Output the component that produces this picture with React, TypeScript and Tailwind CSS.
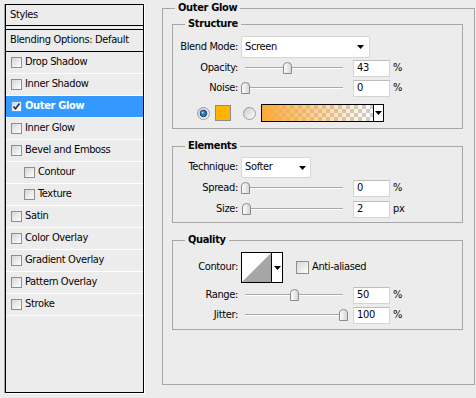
import React from "react";

const LAYERS = [
  { label: "Drop Shadow" },
  { label: "Inner Shadow" },
  { label: "Outer Glow", checked: true, active: true },
  { label: "Inner Glow" },
  { label: "Bevel and Emboss" },
  { label: "Contour", nested: true },
  { label: "Texture", nested: true },
  { label: "Satin" },
  { label: "Color Overlay" },
  { label: "Gradient Overlay" },
  { label: "Pattern Overlay" },
  { label: "Stroke" },
];

function Check({ checked = false, size = "h-[11px] w-[11px]" }: { checked?: boolean; size?: string }) {
  return (
    <span
      className={`${size} flex shrink-0 items-center justify-center border border-[#8e8e8e] bg-linear-to-br from-[#d6d6d6] to-white`}
    >
      {checked && (
        <svg width="9" height="9" viewBox="0 0 9 9">
          <path d="M1.5 4.5 L3.5 6.8 L7.5 1.5" fill="none" stroke="#1c2a6b" strokeWidth="1.6" />
        </svg>
      )}
    </span>
  );
}

function Radio({ on = false }: { on?: boolean }) {
  return (
    <svg width="13" height="13" viewBox="0 0 13 13" className="shrink-0">
      <defs>
        <linearGradient id={on ? "rg1" : "rg2"} x1="0" y1="0" x2="1" y2="1">
          <stop offset="0" stopColor="#c9c9c9" />
          <stop offset="1" stopColor="#ffffff" />
        </linearGradient>
      </defs>
      <circle cx="6.5" cy="6.5" r="6" fill={`url(#${on ? "rg1" : "rg2"})`} stroke="#9d9d9d" />
      {on && (
        <>
          <circle cx="6.5" cy="6.5" r="3.3" fill="#1f7fc6" stroke="#0c3563" strokeWidth="0.9" />
          <circle cx="5.6" cy="5.6" r="1" fill="#bfe3ff" />
        </>
      )}
    </svg>
  );
}

function Arrow() {
  return (
    <svg width="7" height="4" viewBox="0 0 7 4" className="shrink-0">
      <path d="M0 0 H7 L3.5 4 Z" fill="#000" />
    </svg>
  );
}

function Slider({ value }: { value: number }) {
  return (
    <div className="relative h-[12px] w-[108px] shrink-0">
      <div className="absolute left-[4px] right-[6px] top-[5px] h-[2px] border-t border-b border-t-[#a8a8a8] border-b-white" />
      <svg
        width="9"
        height="12"
        viewBox="0 0 9 12"
        className="absolute top-0"
        style={{ left: 4 + value * 0.98 - 4.5 }}
      >
        <defs>
          <linearGradient id="th" x1="0" y1="0" x2="1" y2="0">
            <stop offset="0" stopColor="#ffffff" />
            <stop offset="1" stopColor="#d4d4d4" />
          </linearGradient>
        </defs>
        <path d="M0.5 11.5 V4 Q0.5 0.5 4.5 0.5 Q8.5 0.5 8.5 4 V11.5 Z" fill="url(#th)" stroke="#8a8a8a" />
      </svg>
    </div>
  );
}

function Field({ value }: { value: string }) {
  return (
    <div className="ml-[4px] flex h-[17px] w-[37px] shrink-0 items-center border border-[#d4d4d4] border-t-[#bdbdbd] bg-white pl-[3px]">
      {value}
    </div>
  );
}

function Row({ label, className, children }: { label: string; className: string; children: React.ReactNode }) {
  return (
    <div className={`flex items-center ${className}`}>
      <span className="flex w-[56px] shrink-0 justify-end whitespace-nowrap">{label}</span>
      <div className="ml-[3px] flex items-center">{children}</div>
    </div>
  );
}

function SliderRow({ label, value, unit, className }: { label: string; value: number; unit: string; className: string }) {
  return (
    <Row label={label} className={className}>
      <Slider value={value} />
      <Field value={String(value)} />
      <span className="ml-[3px]">{unit}</span>
    </Row>
  );
}

export default function App() {
  return (
    <div className="flex h-[398px] w-[476px] items-start bg-[#ececec] font-['DejaVu_Sans_Condensed','Liberation_Sans',sans-serif] text-[11px] tracking-[-0.35px] text-[#050505]">
      {/* left: style list */}
      <div className="mt-[4px] ml-[5px] h-[389px] w-[139px] border border-black bg-[#ececec] shadow-[-1px_0_0_#a9a9a9,1px_1px_0_#fff]">
        <div className="flex h-[21px] items-center border-b border-black pl-[4px]">Styles</div>
        <div className="h-[3px]" />
        <div className="flex h-[23px] items-center border-y border-black pl-[4px]">Blending Options: Default</div>
        {LAYERS.map((l) => (
          <div
            key={l.label}
            className={`flex h-[22px] items-center gap-[3px] border-b border-white ${l.nested ? "pl-[18px]" : "pl-[5px]"} ${
              l.active ? "bg-[#3399ff] font-bold text-white" : ""
            }`}
          >
            <Check checked={l.checked} />
            <span>{l.label}</span>
          </div>
        ))}
      </div>

      {/* right: outer glow settings */}
      <fieldset className="ml-[18px] h-[385px] w-[313px] shrink-0 border border-[#a6a6a6] pl-[9px] pr-[11px]">
        <legend className="ml-[3px] px-[3px] font-bold leading-[16px]">Outer Glow</legend>

        <fieldset className="border border-[#a6a6a6] pl-[9px] pt-[4px] pb-[4px]">
          <legend className="ml-[3px] px-[3px] font-bold leading-[16px]">Structure</legend>
          <Row label="Blend Mode:" className="h-[22px]">
            <div className="flex h-[22px] w-[129px] items-center justify-between rounded-[2px] border border-[#d6d6d6] bg-white pl-[3px] pr-[5px]">
              <span>Screen</span>
              <Arrow />
            </div>
          </Row>
          <SliderRow label="Opacity:" value={43} unit="%" className="h-[20px]" />
          <SliderRow label="Noise:" value={0} unit="%" className="h-[20px]" />
          <div className="mt-[4px] flex h-[22px] items-center pl-[15px]">
            <Radio on />
            <div className="ml-[5px] h-[16px] w-[16px] border border-[#8c8c8c] bg-[#ffb400]" />
            <div className="ml-[12px]">
              <Radio />
            </div>
            <div className="ml-[5px] flex h-[18px] w-[123px] border border-black">
              <div className="h-full w-[111px] bg-[conic-gradient(#cdcdcd_25%,#fff_0_50%,#cdcdcd_0_75%,#fff_0)] bg-[length:8px_8px]">
                <div className="h-full w-full bg-linear-to-r from-[#fba93a] to-[#fba93a]/0" />
              </div>
              <div className="flex w-[10px] items-center justify-center border-l border-black bg-white">
                <Arrow />
              </div>
            </div>
          </div>
        </fieldset>

        <fieldset className="mt-[9px] border border-[#a6a6a6] pl-[9px] pt-[3px] pb-[2px]">
          <legend className="ml-[3px] px-[3px] font-bold leading-[16px]">Elements</legend>
          <Row label="Technique:" className="h-[21px]">
            <div className="flex h-[21px] w-[70px] items-center justify-between rounded-[2px] border border-[#d6d6d6] bg-white pl-[3px] pr-[4px]">
              <span>Softer</span>
              <Arrow />
            </div>
          </Row>
          <SliderRow label="Spread:" value={0} unit="%" className="h-[20px]" />
          <SliderRow label="Size:" value={2} unit="px" className="h-[22px]" />
        </fieldset>

        <fieldset className="mt-[9px] border border-[#a6a6a6] pl-[9px] pt-[4px] pb-[4px]">
          <legend className="ml-[3px] px-[3px] font-bold leading-[16px]">Quality</legend>
          <Row label="Contour:" className="h-[31px]">
            <div className="flex h-[31px] w-[42px] border border-black bg-white">
              <svg width="29" height="29" viewBox="0 0 29 29" className="shrink-0">
                <path d="M0 29 L29 0 V29 Z" fill="#a6a6a6" />
              </svg>
              <div className="flex flex-1 items-center justify-center border-l border-black">
                <Arrow />
              </div>
            </div>
            <div className="ml-[13px] flex items-center gap-[3px]">
              <Check size="h-[13px] w-[13px]" />
              <span>Anti-aliased</span>
            </div>
          </Row>
          <SliderRow label="Range:" value={50} unit="%" className="mt-[2px] h-[20px]" />
          <SliderRow label="Jitter:" value={100} unit="%" className="h-[20px]" />
        </fieldset>
      </fieldset>
    </div>
  );
}
